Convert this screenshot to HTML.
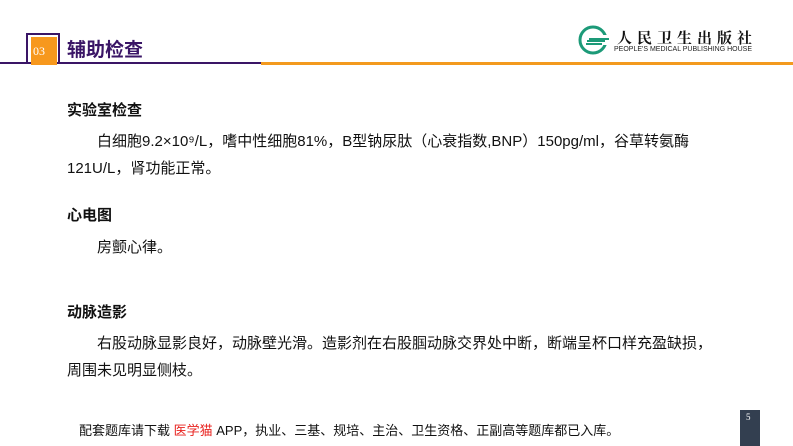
<!DOCTYPE html>
<html><head><meta charset="utf-8"><style>
body{margin:0;width:793px;height:446px;overflow:hidden;background:#fff;position:relative;font-family:"Liberation Sans","Noto Sans CJK SC",sans-serif;color:#111}
.a{position:absolute;white-space:nowrap}
.h{font-weight:bold;font-size:15px;left:67px}
.t{font-size:15px;left:97px}
</style></head><body>
<div class="a" style="left:0;top:62px;width:261px;height:2px;background:#3a1566"></div>
<div class="a" style="left:261px;top:62px;width:532px;height:3px;background:#f39a1e"></div>
<div class="a" style="left:26px;top:33px;width:30px;height:29px;border:2px solid #3a1566;border-bottom:none"></div>
<div class="a" style="left:31px;top:37px;width:26px;height:28px;background:#f7981d"></div>
<div class="a" style="left:33px;top:44px;color:#fff;font-family:'Liberation Serif',serif;font-size:12px">03</div>
<div class="a" style="left:67px;top:35px;font-size:19px;font-weight:bold;color:#3a1566">辅助检查</div>
<svg class="a" style="left:577px;top:24px" width="36" height="32" viewBox="0 0 36 32"><circle cx="16" cy="16" r="13" fill="none" stroke="#1c9a78" stroke-width="3"/><rect x="8" y="11" width="26" height="10" fill="#fff"/><path d="M9 20h16M12 15h20M10 17h18" stroke="#1c9a78" stroke-width="2"/></svg>
<div class="a" style="left:617px;top:27px;font-size:15px;font-weight:bold;letter-spacing:5px;color:#111;font-family:'Noto Serif CJK SC',serif">人民卫生出版社</div>
<div class="a" style="left:614px;top:46px;font-size:7px;color:#222">PEOPLE'S MEDICAL PUBLISHING HOUSE</div>
<div class="a h" style="top:99px">实验室检查</div>
<div class="a t" style="top:130px">白细胞9.2×10⁹/L，嗜中性细胞81%，B型钠尿肽（心衰指数,BNP）150pg/ml，谷草转氨酶</div>
<div class="a" style="left:67px;top:157px;font-size:15px">121U/L，肾功能正常。</div>
<div class="a h" style="top:204px">心电图</div>
<div class="a t" style="top:236px">房颤心律。</div>
<div class="a h" style="top:301px">动脉造影</div>
<div class="a t" style="top:332px">右股动脉显影良好，动脉壁光滑。造影剂在右股腘动脉交界处中断，断端呈杯口样充盈缺损，</div>
<div class="a" style="left:67px;top:359px;font-size:15px">周围未见明显侧枝。</div>
<div class="a" style="left:79px;top:420px;font-size:13px">配套题库请下载 <span style="color:#e8211e">医学猫</span> APP，执业、三基、规培、主治、卫生资格、正副高等题库都已入库。</div>
<div class="a" style="left:740px;top:410px;width:20px;height:36px;background:#333f50"></div>
<div class="a" style="left:746px;top:412px;color:#fff;font-size:9px;font-family:'Liberation Serif',serif">5</div>
</body></html>
